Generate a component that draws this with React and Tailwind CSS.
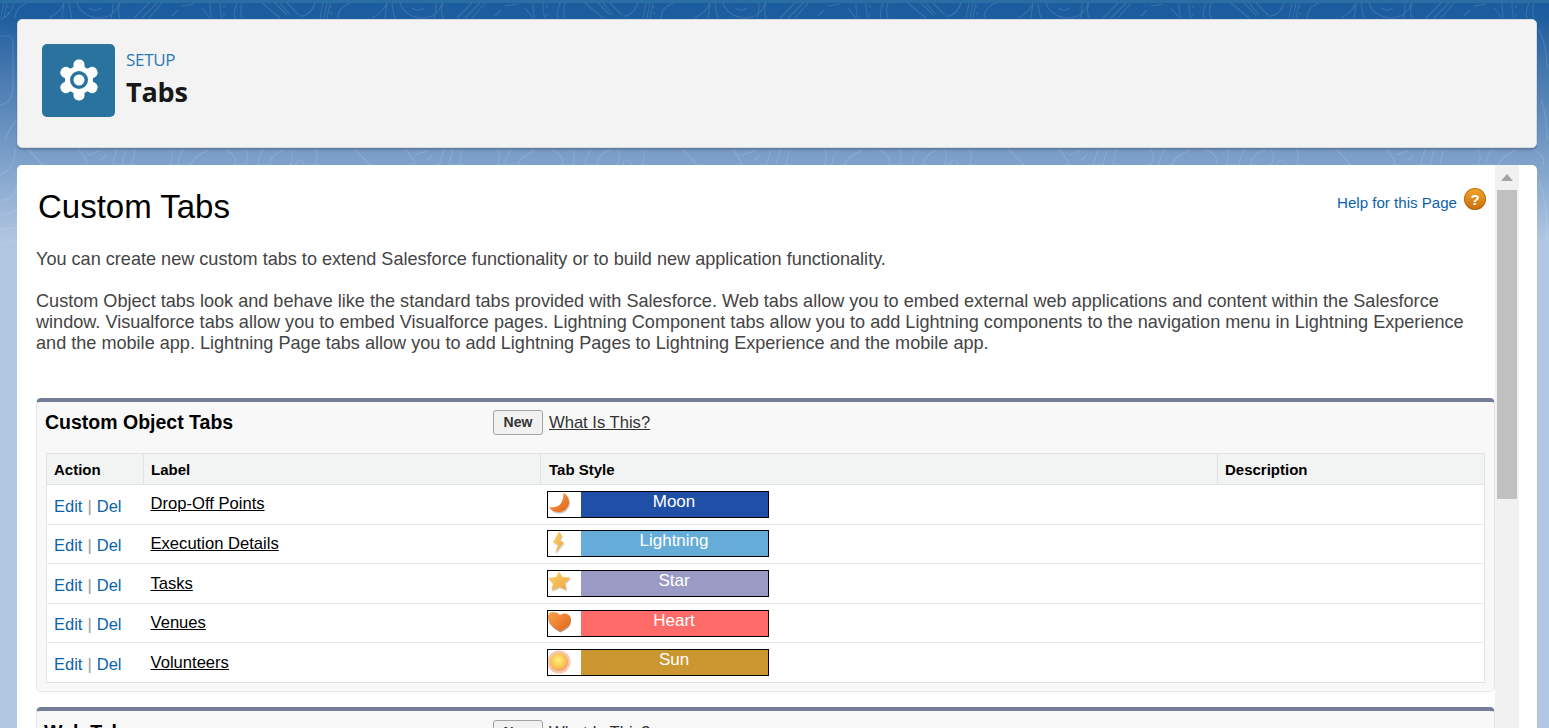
import React from "react";

const Gear = () => (
  <svg width="40" height="42" viewBox="0 0 40 42" fill="none">
    <g fill="#fff" transform="translate(20 21)">
      <circle r="14" />
      <rect x="-5.500" y="-20.500" width="11" height="41" rx="5" />
      <rect x="-5.500" y="-20.500" width="11" height="41" rx="5" transform="rotate(60)" />
      <rect x="-5.500" y="-20.500" width="11" height="41" rx="5" transform="rotate(120)" />
    </g>
    <circle cx="20" cy="21" r="9" fill="#2a739f" />
    <circle cx="20" cy="21" r="5.500" fill="#fff" />
  </svg>
);

const TOP = "M0 16c6 0 12-4 15-13M20 18l3-15M24 18l3-15M27 18l3-15M31 12v3M31 6v2M38 18c0-6 4-12 12-15M72 18c6-3 12-8 15-15M85 18l2-15M92 3c1 6 1 10 3 15M100 3c2 8 12 15 22 15s18-6 20-15M112 8c4 3 8 3 12 0M134 18c2-5 2-10 2-15M143 18c-2-5-2-10 0-15M157 18l15-15M165 18l15-15M172 18l13-15M195 16l6-6M205 6l12-2M225 8l8 10M233 3c0 5 0 10 2 15M243 3c0 5 0 10 2 15M247 5v3M247 13v3M258 18c-2-5 0-10 2-15M265 3c-2 6-2 10 0 15M285 3l18 15M298 3l12 12M303 3l10 12M310 3l12 12";
const BOTTOM = "M27 148l16 17M78 148c4 6 8 10 10 17M88 155l12-4M100 160l6-5M112 165l5-15M122 165l4-15M132 165l3-15M170 150c3 5 3 10 0 15M178 165c0-6 2-10 6-15M190 165c4-8 10-10 18-15M225 150c10 4 12 10 10 15M246 150c2 5 2 10-1 15M258 165c0-6 2-10 6-15M270 165c0-6 4-12 14-15M290 165c3-4 4-10 0-15M296 165a4 5 0 0 1 8 0M315 150c3 5 3 10 0 15";

const Topo = () => (
  <svg className="absolute inset-0 w-full h-full" viewBox="0 0 1549 728" preserveAspectRatio="none" fill="none" stroke="#ffffff" strokeOpacity="0.13" strokeWidth="1.100">
    {[-23, 300, 623, 946, 1269].map((x) => (
      <path key={x} d={TOP} transform={`translate(${x} 0)`} />
    ))}
    {[0, 327, 654, 981, 1308].map((x) => (
      <path key={x} d={BOTTOM} transform={`translate(${x} 0)`} />
    ))}
    <path d="M0 36h8c4 0 5 4 5 10v40c0 12-5 18-13 19M0 20c6-2 12-8 14-17M5 140c3-8 6-14 12-20M0 175c10-4 15-14 15-26M0 200c6 2 15-4 17-14M0 215c6 0 14-2 17-6M0 230l17-3M0 245c6-4 12-4 17-4" />
    <path d="M1539 30c5 10 8 20 8 40M1541 100c4 10 6 20 6 40M1539 180c6 16 8 30 8 60" />
  </svg>
);

const Svg = ({ children }) => (
  <svg width="32" height="25" viewBox="0 0 32 25" className="block blur-[0.4px]">
    <defs>
      <linearGradient id="og" x1="0" y1="0" x2="1" y2="1">
        <stop offset="0" stopColor="#f9a24b" />
        <stop offset="1" stopColor="#e2631b" />
      </linearGradient>
      <linearGradient id="yg" x1="0" y1="0" x2="1" y2="1">
        <stop offset="0" stopColor="#fbd46d" />
        <stop offset="1" stopColor="#f0a23c" />
      </linearGradient>
      <radialGradient id="sg" cx="0.45" cy="0.4" r="0.6">
        <stop offset="0" stopColor="#fff080" />
        <stop offset="0.7" stopColor="#f9c24e" />
        <stop offset="1" stopColor="#f09a70" />
      </radialGradient>
    </defs>
    {children}
  </svg>
);

const MOON = "M15 1C22 4 23 12 18 17C13 22 5 21 1 15C6 16 11 15 13 11C15 8 16 4 15 1z";
const BOLT = "M11 1 L5 12 L10 14 L7 23 L16 12 L12 10 L14 5 z";
const STAR = "M11 .5l3.500 5.500 8 .500-5.500 5.500 1.500 7-7-3-8 3.500 1.500-7L0 7l8-1z";
const HEART = "M12 20C5 16 0 12 0 6c0-3 2-5 5-5 3 0 5 1 7 3 2-1 4-2 7-1 3 1 4 3 3.500 6 0 5-4.500 8-10.500 11z";

const icons = {
  Moon: (
    <Svg>
      <path d={MOON} fill="#b5b5b5" transform="translate(.8 1.500)" opacity="0.7" />
      <path d={MOON} fill="url(#og)" />
    </Svg>
  ),
  Lightning: (
    <Svg>
      <path d={BOLT} fill="#c9c9c9" transform="translate(.8 1)" opacity="0.7" />
      <path d={BOLT} fill="url(#yg)" transform="translate(0 -.5)" />
    </Svg>
  ),
  Star: (
    <Svg>
      <path d={STAR} fill="#c7c7c7" transform="translate(.8 1.500)" opacity="0.8" />
      <path d={STAR} fill="url(#yg)" />
    </Svg>
  ),
  Heart: (
    <Svg>
      <path d={HEART} fill="#a9865c" transform="translate(.5 1.500)" opacity="0.85" />
      <path d={HEART} fill="url(#og)" />
    </Svg>
  ),
  Sun: (
    <Svg>
      <circle cx="11" cy="12" r="11.500" fill="#f8c8ae" />
      <circle cx="11" cy="12" r="9" fill="url(#sg)" />
    </Svg>
  ),
};

const rows = [
  { label: "Drop-Off Points", style: "Moon", bg: "bg-[#1f4fa6]", h: "h-[40px]", act: "pt-[11px]", lab: "pt-[9px]", box: "pt-[6px]" },
  { label: "Execution Details", style: "Lightning", bg: "bg-[#66acd9]", h: "h-[39px]", act: "pt-[10px]", lab: "pt-[9px]", box: "pt-[5px]" },
  { label: "Tasks", style: "Star", bg: "bg-[#9b9ac4]", h: "h-[40px]", act: "pt-[11px]", lab: "pt-[10px]", box: "pt-[6px]" },
  { label: "Venues", style: "Heart", bg: "bg-[#ff6b68]", h: "h-[39px]", act: "pt-[10px]", lab: "pt-[9px]", box: "pt-[6px]" },
  { label: "Volunteers", style: "Sun", bg: "bg-[#cb9731]", h: "h-[40px]", act: "pt-[11px]", lab: "pt-[10px]", box: "pt-[6px]" },
];

const Th = ({ children, pad = "pl-[7px]" }) => (
  <th className={`text-left font-bold text-[15px] text-black ${pad} pt-[2px] border-l border-[#e0e3e5] first:border-l-0`}>{children}</th>
);

const Head = ({ title, web }) => (
  <div className="flex items-start h-[51px]">
    <h2 className={`w-[448px] text-[19.5px] leading-[26px] font-bold text-black ${web ? "pt-[8px] -ml-[1px] mr-[1px]" : "pt-[7px]"}`}>{title}</h2>
    <button className={`${web ? "mt-[9px]" : "mt-[8px]"} h-[25px] w-[50px] rounded-[3px] border border-[#a3a3a3] bg-[#f1f1f1] text-[14px] font-bold text-[#333]`}>New</button>
    <a className={`ml-[6px] ${web ? "mt-[11px]" : "mt-[10px]"} text-[16.6px] leading-[22px] text-[#333] underline`}>What Is This?</a>
  </div>
);

export default function App() {
  return (
    <div className="relative h-[728px] overflow-hidden bg-gradient-to-b from-[#1b5d9e] from-[2%] to-[#b0c6e1] to-[33%] pt-[19px] pl-[17px] pr-[12px] font-['Liberation_Sans',sans-serif]">
      <div className="absolute top-0 left-0 right-0 h-[3px] bg-[#2a6fa4]" />
      <Topo />
      <header className="relative flex items-center h-[129px] w-[1520px] rounded-[5px] bg-[#f3f3f3] border border-[#d8dbde] shadow-[0_2px_2px_rgba(60,70,90,0.35)] pl-[24px] pb-[7px]">
        <div className="flex items-center justify-center w-[73px] h-[73px] rounded-[5px] bg-[#2a739f]">
          <Gear />
        </div>
        <div className="ml-[11px] font-['Open_Sans',sans-serif]">
          <div className="-mt-[1px] text-[17px] leading-[20px] text-[#2b7ab1] tracking-[-0.3px]">SETUP</div>
          <div className="mt-[4px] text-[27px] leading-[36px] font-bold text-[#181818] tracking-[-0.2px]">Tabs</div>
        </div>
      </header>

      <main className="relative mt-[17px] flex w-[1520px] h-[600px] rounded-t-[5px] overflow-hidden bg-white">
        <div className="w-[1478px] shrink-0 pl-[19px]">
          <div className="flex justify-between items-start pt-[22px] pr-[9px]">
            <h1 className="text-[33px] leading-[40px] text-black pl-[2px]">Custom Tabs</h1>
            <div className="flex items-start pt-[1px]">
              <a className="text-[15.1px] leading-[30px] text-[#0b62ac]">Help for this Page</a>
              <span className="ml-[7px] flex items-center justify-center w-[22px] h-[22px] rounded-full bg-gradient-to-b from-[#f4a62a] to-[#c76f0c] shadow-[inset_0_0_0_1px_rgba(150,90,10,0.5)] text-white text-[15px] font-bold leading-none">?</span>
            </div>
          </div>
          <div className="mt-[22px] text-[#444] text-[18.1px] leading-[21px]">
            <p>You can create new custom tabs to extend Salesforce functionality or to build new application functionality.</p>
            <p className="mt-[21px] w-[1445px]">
              Custom Object tabs look and behave like the standard tabs provided with Salesforce. Web tabs allow you to embed external web applications and content within the Salesforce window. Visualforce tabs allow you to embed Visualforce pages. Lightning Component tabs allow you to add Lightning components to the navigation menu in Lightning Experience and the mobile app. Lightning Page tabs allow you to add Lightning Pages to Lightning Experience and the mobile app.
            </p>
          </div>

          <section className="mt-[44px] w-[1459px] h-[294px] rounded-[5px] border border-t-[4px] border-[#e6e8e8] border-t-[#747e96] bg-[#f8f8f8] px-[8px]">
            <Head title="Custom Object Tabs" />
            <table className="w-[1438px] ml-[1px] table-fixed border-collapse border border-[#e0e3e5] bg-white">
              <colgroup>
                <col className="w-[97px]" />
                <col className="w-[397px]" />
                <col className="w-[677px]" />
                <col className="w-[267px]" />
              </colgroup>
              <thead>
                <tr className="h-[31px] bg-[#f2f3f3] border-b border-[#e0e3e5]">
                  <Th>Action</Th>
                  <Th>Label</Th>
                  <Th pad="pl-[8px]">Tab Style</Th>
                  <Th>Description</Th>
                </tr>
              </thead>
              <tbody>
                {rows.map(({ label, style, bg, h, act, lab, box }) => (
                  <tr key={label} className={`${h} border-b border-[#e8e9ea] last:border-b-0`}>
                    <td className={`pl-[7px] align-top ${act} text-[16.5px] leading-[20px] whitespace-nowrap`}>
                      <a className="text-[#0b62ac]">Edit</a>
                      <span className="text-[#999] mx-[5px]">|</span>
                      <a className="text-[#0b62ac]">Del</a>
                    </td>
                    <td className={`pl-[7px] align-top ${lab} text-[16.6px] leading-[20px] text-black`}><a className="underline">{label}</a></td>
                    <td className={`pl-[6px] align-top ${box}`}>
                      <div className="flex w-[222px] h-[27px] border border-black">
                        <div className="w-[33px] bg-white shrink-0 overflow-hidden">{icons[style]}</div>
                        <div className={`flex-1 ${bg} text-center text-white text-[17px] leading-[20px]`}>{style}</div>
                      </div>
                    </td>
                    <td />
                  </tr>
                ))}
              </tbody>
            </table>
          </section>

          <section className="mt-[15px] w-[1459px] h-[100px] rounded-t-[5px] border border-t-[4px] border-[#e6e8e8] border-t-[#747e96] bg-[#f8f8f8] px-[8px]">
            <Head title="Web Tabs" web />
          </section>
        </div>

        <div className="w-[24px] shrink-0 bg-[#f1f1f1] px-[2px] relative">
          <div className="mt-[9px] mx-auto w-0 h-0 border-x-[6px] border-x-transparent border-b-[7px] border-b-[#a3a3a3]" />
          <div className="mt-[9px] h-[309px] bg-[#c0c0c0]" />
        </div>
      </main>
    </div>
  );
}
